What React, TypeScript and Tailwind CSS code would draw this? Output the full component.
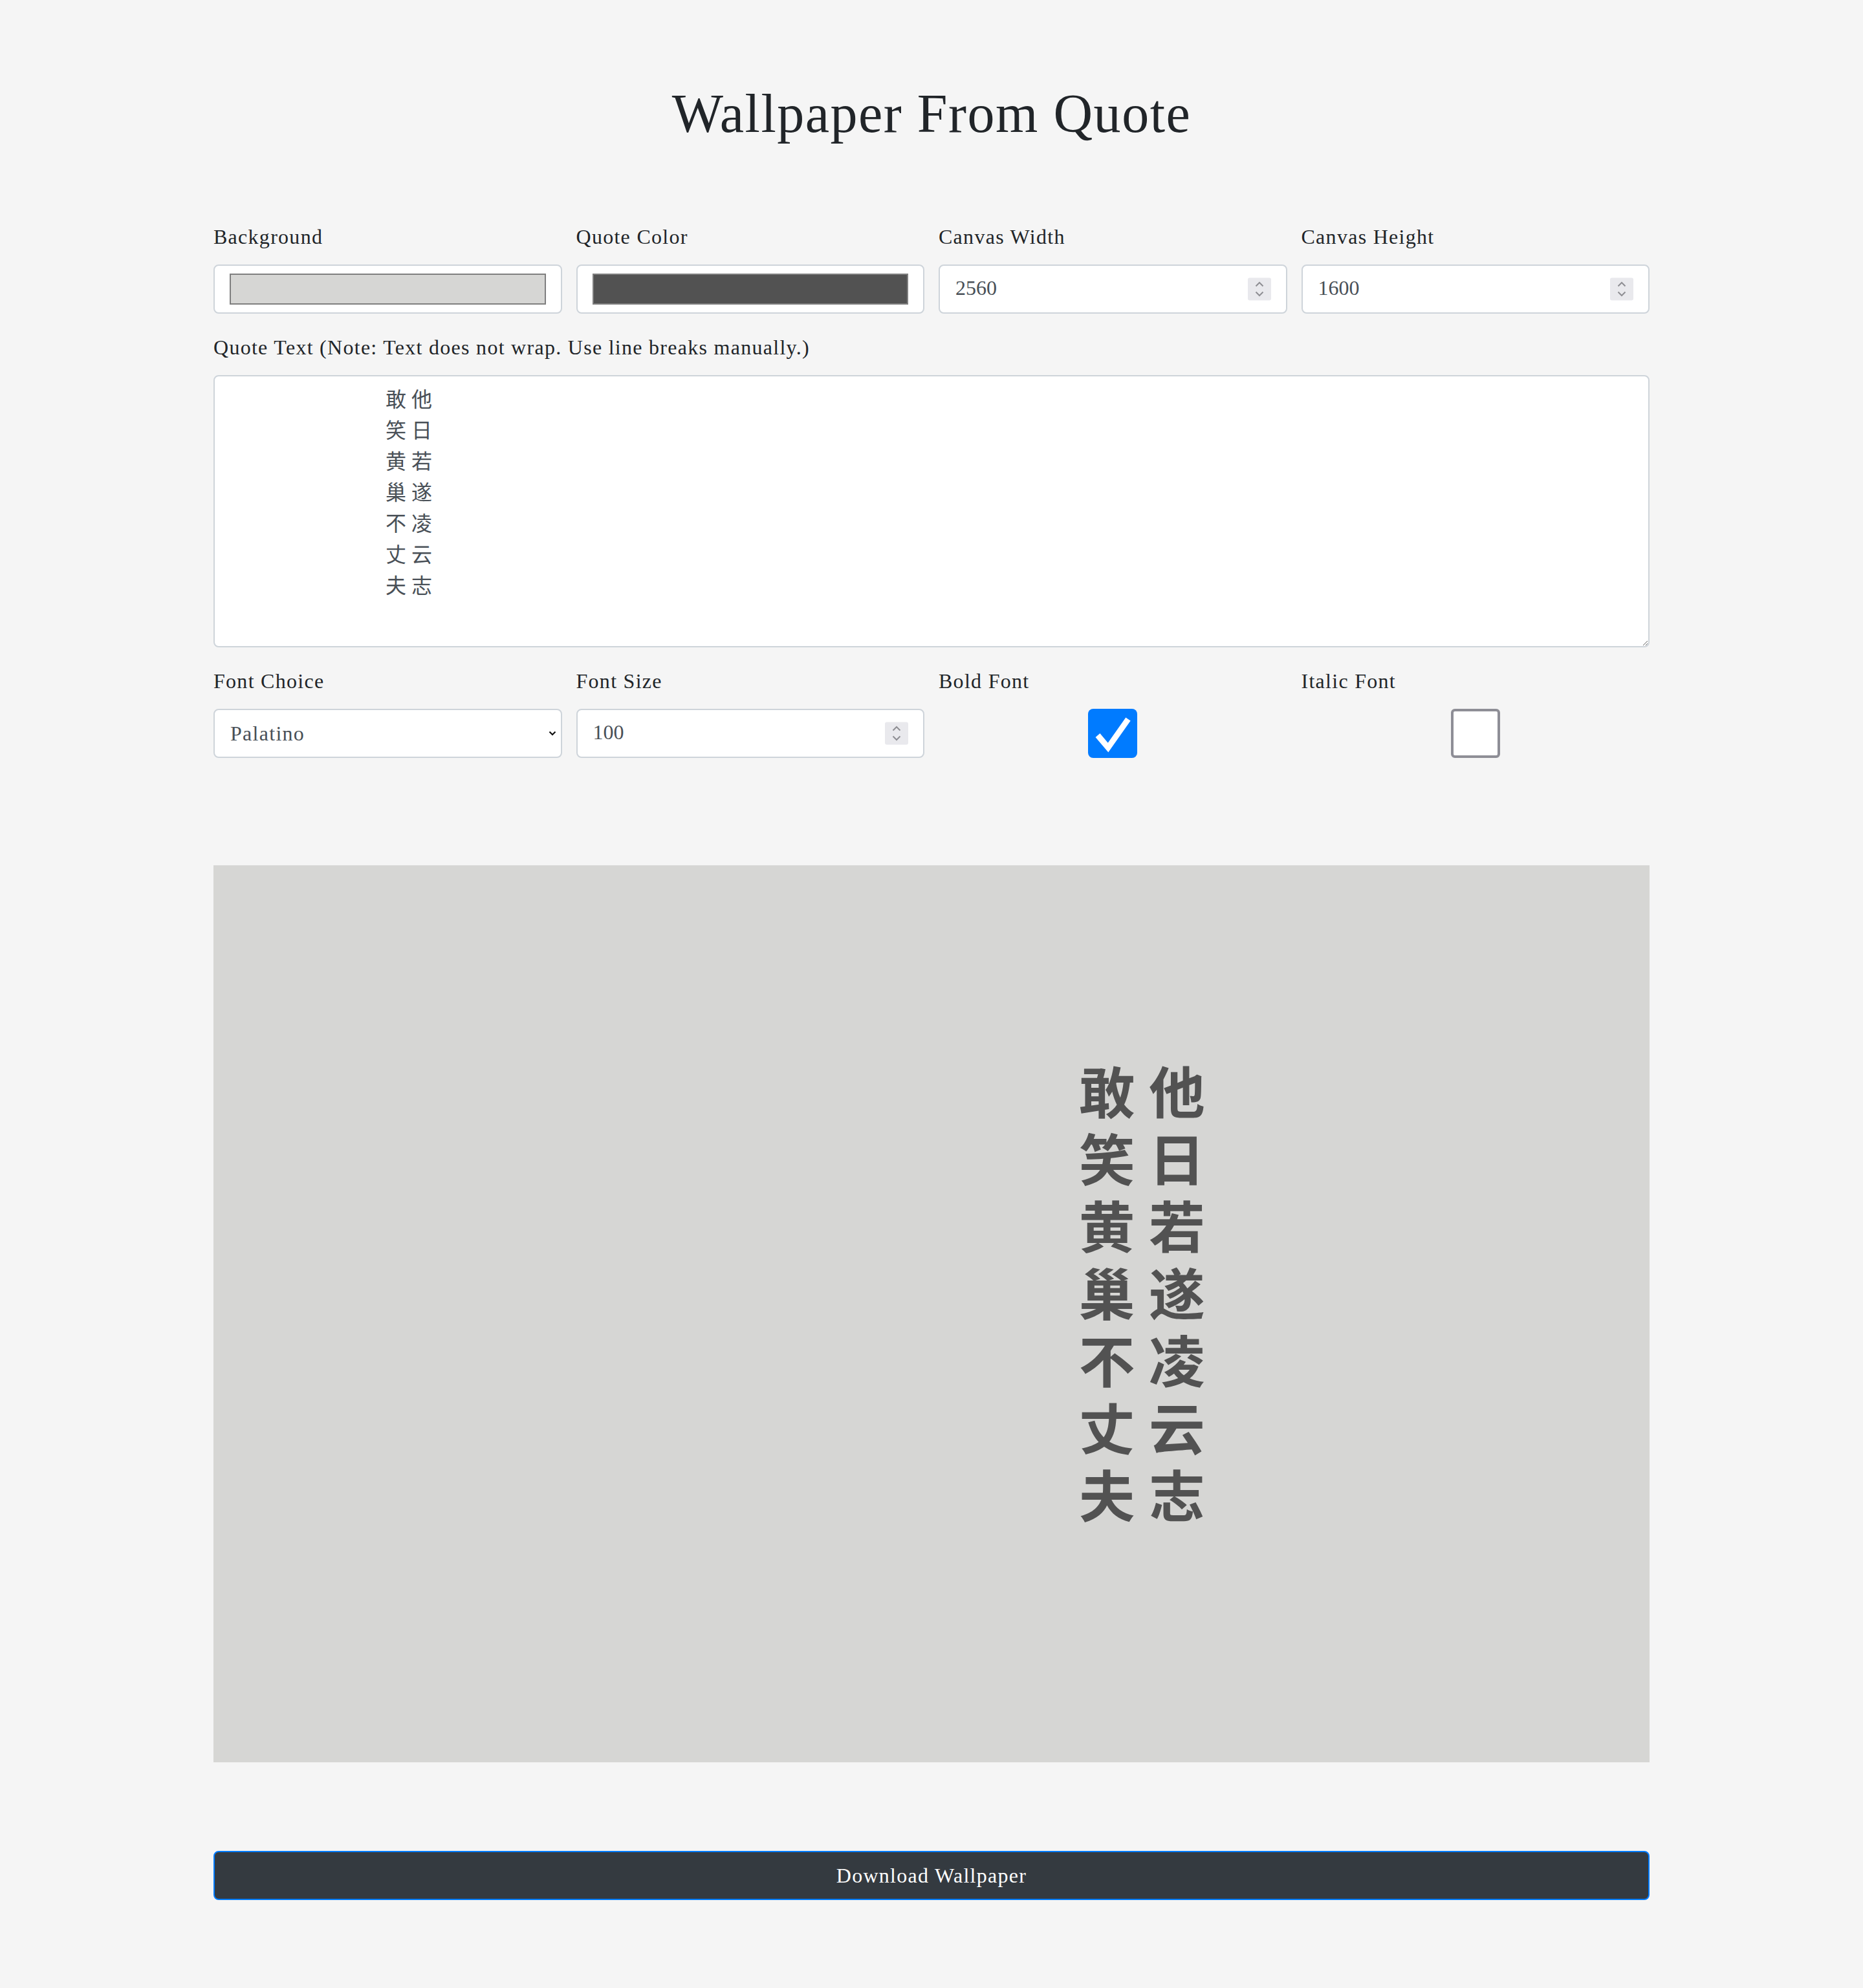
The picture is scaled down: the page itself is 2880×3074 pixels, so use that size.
import React from "react";

const lines = [
  "敢 他",
  "笑 日",
  "黄 若",
  "巢 遂",
  "不 凌",
  "丈 云",
  "夫 志",
];
const indent = " ".repeat(30);
const quote = lines.map((l) => indent + l).join("\n");

function Label({ children }: { children: React.ReactNode }) {
  return (
    <label className="mb-[19px] block text-[32px] leading-[48px] tracking-[0.04em]">
      {children}
    </label>
  );
}

function ColorField({ label, color }: { label: string; color: string }) {
  return (
    <div>
      <Label>{label}</Label>
      <div className="flex h-[76px] items-center rounded-[8px] border-2 border-[#ced4da] bg-white px-[23px]">
        <div
          className="h-[48px] w-full border-2 border-[#7f7f7f]"
          style={{ backgroundColor: color }}
        />
      </div>
    </div>
  );
}

function Spinner() {
  return (
    <div className="pointer-events-none absolute top-1/2 right-[25px] h-[35px] w-[36px] -translate-y-1/2 rounded-[3px] bg-[#e9e9ed]">
      <svg width="36" height="35" viewBox="0 0 36 35" fill="none" stroke="#8e8e93" strokeWidth="2">
        <path d="M12.5 13 L18 7.5 L23.5 13" />
        <path d="M12.5 22 L18 27.5 L23.5 22" />
      </svg>
    </div>
  );
}

function NumberField({ label, value }: { label: string; value: string }) {
  return (
    <div>
      <Label>{label}</Label>
      <div className="relative">
        <input
          type="text"
          inputMode="numeric"
          defaultValue={value}
          className="h-[76px] w-full rounded-[8px] border-2 border-[#ced4da] bg-white px-[24px] pb-[3px] text-[32px] text-[#495057] outline-none"
        />
        <Spinner />
      </div>
    </div>
  );
}

function CheckField({ label, checked }: { label: string; checked: boolean }) {
  return (
    <div>
      <Label>{label}</Label>
      <div className="flex h-[76px] items-center justify-center">
        {checked ? (
          <div className="h-[76px] w-[76px] rounded-[8px] bg-[#007bff]">
            <svg width="76" height="76" viewBox="0 0 76 76" fill="none">
              <path d="M15 41 L31 60 L62 16" stroke="white" strokeWidth="9" strokeLinejoin="miter" />
            </svg>
          </div>
        ) : (
          <div className="h-[76px] w-[76px] rounded-[6px] border-4 border-[#8e8e96] bg-white" />
        )}
      </div>
    </div>
  );
}

export default function App() {
  return (
    <div className="min-h-screen bg-[#f5f5f5] font-['Liberation_Serif','Noto_Sans_CJK_SC',serif] text-[#212529]">
      <div className="mx-auto w-[2220px] pt-[128px] pb-[136px]">
        <h1 className="text-center text-[84px] leading-[96px] font-normal tracking-[0.018em]">
          Wallpaper From Quote
        </h1>

        <div className="mt-[118px] grid grid-cols-4 gap-x-[22px]">
          <ColorField label="Background" color="#d6d6d4" />
          <ColorField label="Quote Color" color="#525252" />
          <NumberField label="Canvas Width" value="2560" />
          <NumberField label="Canvas Height" value="1600" />
        </div>

        <div className="mt-[28px]">
          <Label>Quote Text (Note: Text does not wrap. Use line breaks manually.)</Label>
          <textarea
            defaultValue={quote}
            className="block h-[421px] w-full rounded-[8px] border-2 border-[#ced4da] bg-white px-[24px] py-[12px] text-[32px] leading-[48px] text-[#495057] outline-none"
          />
        </div>

        <div className="mt-[28px] grid grid-cols-4 gap-x-[22px]">
          <div>
            <Label>Font Choice</Label>
            <div className="relative">
              <select
                defaultValue="Palatino"
                className="h-[76px] w-full appearance-none rounded-[8px] border-2 border-[#ced4da] bg-white px-[24px] text-[32px] tracking-[0.04em] text-[#495057] outline-none"
              >
                <option>Palatino</option>
                <option>Georgia</option>
                <option>Arial</option>
              </select>
              <svg
                className="pointer-events-none absolute top-1/2 right-[9px] -translate-y-1/2"
                width="12"
                height="8"
                viewBox="0 0 12 8"
                fill="none"
                stroke="#111"
                strokeWidth="2.2"
              >
                <path d="M1.5 1.5 L6 6 L10.5 1.5" />
              </svg>
            </div>
          </div>
          <NumberField label="Font Size" value="100" />
          <CheckField label="Bold Font" checked />
          <CheckField label="Italic Font" checked={false} />
        </div>

        <div className="mt-[166px] h-[1387px] w-full bg-[#d6d6d4] pt-[303px] text-center text-[86.72px] font-bold text-[#525252]">
          {lines.map((l) => (
            <div key={l} className="h-[104.06px] leading-[104.06px] whitespace-pre">
              {indent + l}
            </div>
          ))}
        </div>

        <button className="mt-[137px] h-[76px] w-full rounded-[8px] border-2 border-[#007bff] bg-[#343a40] text-[32px] tracking-[0.04em] text-white">
          Download Wallpaper
        </button>
      </div>
    </div>
  );
}
